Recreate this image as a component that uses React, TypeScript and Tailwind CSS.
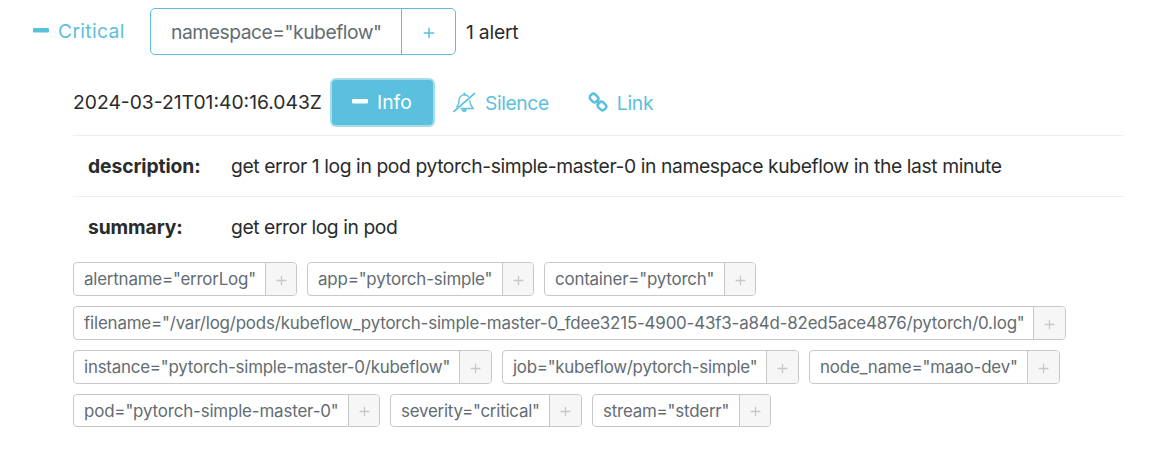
type Label = { text: string; width: string; plus: string; tracking: string };

const labelRows: { height: string; labels: Label[] }[] = [
  {
    height: "h-[34px]",
    labels: [
      { text: 'alertname="errorLog"', width: "w-[191px]", plus: "w-[32px]", tracking: "tracking-[-0.19px]" },
      { text: 'app="pytorch-simple"', width: "w-[194px]", plus: "w-[32px]", tracking: "tracking-[-0.17px]" },
      { text: 'container="pytorch"', width: "w-[179px]", plus: "w-[32px]", tracking: "tracking-[-0.2px]" },
    ],
  },
  {
    height: "h-[34px]",
    labels: [
      {
        text: 'filename="/var/log/pods/kubeflow_pytorch-simple-master-0_fdee3215-4900-43f3-a84d-82ed5ace4876/pytorch/0.log"',
        width: "w-[959px]",
        plus: "w-[33px]",
        tracking: "tracking-[-0.172px]",
      },
    ],
  },
  {
    height: "h-[34px]",
    labels: [
      { text: 'instance="pytorch-simple-master-0/kubeflow"', width: "w-[385px]", plus: "w-[33px]", tracking: "tracking-[-0.21px]" },
      { text: 'job="kubeflow/pytorch-simple"', width: "w-[263px]", plus: "w-[33px]", tracking: "tracking-[-0.25px]" },
      { text: 'node_name="maao-dev"', width: "w-[217px]", plus: "w-[33px]", tracking: "tracking-[-0.14px]" },
    ],
  },
  {
    height: "h-[33px]",
    labels: [
      { text: 'pod="pytorch-simple-master-0"', width: "w-[274px]", plus: "w-[32px]", tracking: "tracking-[-0.15px]" },
      { text: 'severity="critical"', width: "w-[158px]", plus: "w-[33px]", tracking: "tracking-[-0.22px]" },
      { text: 'stream="stderr"', width: "w-[146px]", plus: "w-[32px]", tracking: "tracking-[-0.2px]" },
    ],
  },
];

function MinusIcon() {
  return (
    <svg width="16" height="5" viewBox="0 0 16 5" fill="currentColor" aria-hidden="true">
      <rect width="16" height="4.4" rx="1.2" />
    </svg>
  );
}

function PlusIcon({ size, stroke }: { size: number; stroke: number }) {
  return (
    <svg width={size} height={size} viewBox="0 0 12 12" stroke="currentColor" strokeWidth={stroke} aria-hidden="true">
      <path d="M6 .7v10.6M.7 6h10.6" />
    </svg>
  );
}

function BellSlashIcon() {
  return (
    <svg width="23" height="21" viewBox="0 0 23 21" fill="none" stroke="currentColor" strokeWidth="1.3" aria-hidden="true">
      <path d="M3.4 15.2C5.3 13.4 6.2 11 6.2 7.6 6.2 4.8 8.4 2.8 11.4 2.8c2 0 3.5.8 4.3 2.1" />
      <path d="M16.6 8.4c.2 3.2 1.3 5.6 3.5 8.1H7.6" />
      <path d="M11.4 1.5v1" strokeWidth="2" strokeLinecap="round" />
      <path d="M8.5 17.2h5.4a2.7 2.7 0 0 1-5.4 0z" fill="currentColor" stroke="none" />
      <path d="M1 19.4 21.4 1.6" strokeWidth="1.8" strokeLinecap="round" />
    </svg>
  );
}

function ChainIcon() {
  return (
    <svg className="-mt-px" width="20" height="20" viewBox="0 0 20 20" fill="none" stroke="currentColor" strokeWidth="2.5" aria-hidden="true">
      <g transform="rotate(45 10 10)">
        <rect x="0.1" y="6.6" width="8.6" height="6.8" rx="2.8" />
        <rect x="11.3" y="6.6" width="8.6" height="6.8" rx="2.8" />
        <path d="M7.2 10h5.6" strokeWidth="2" />
      </g>
    </svg>
  );
}

function LabelChip({ label }: { label: Label }) {
  return (
    <div className="flex h-full overflow-hidden rounded-[4px] border border-[#c8c8c8]">
      <button className={`${label.width} ${label.tracking} flex items-center pl-[10px] text-left text-[16.9px] leading-[18px] text-[#636c72]`}>
        {label.text}
      </button>
      <button className={`${label.plus} -mr-px flex items-center justify-center border-l border-[#c8c8c8] bg-[#f6f6f6] pt-[2px] pr-px text-[#c8c8c8]`}>
        <PlusIcon size={11} stroke={1.4} />
      </button>
    </div>
  );
}

function Annotation({ name, children, tracking }: { name: string; children: string; tracking: string }) {
  return (
    <div className="flex h-[61px] items-center border-t border-[#eceeef] pl-[15px]">
      <div className="w-[143px] font-bold tracking-[-0.1px]">{name}:</div>
      <div className={tracking}>{children}</div>
    </div>
  );
}

export default function App() {
  return (
    <main className="h-[457px] w-[1150px] bg-white pt-2 pl-[33px] font-['Inter',sans-serif] text-[19.3px] leading-[24px] whitespace-nowrap text-[#292b2c]">
      <header className="flex h-[47px] items-center">
        <button className="flex w-[117px] items-center gap-[9px] pb-[2px] text-[#5bc0de]">
          <MinusIcon />
          <span className="tracking-[0.35px]">Critical</span>
        </button>
        <div className="flex h-[47px] w-[306px] rounded-[5px] border border-[#5bc0de]">
          <button className="flex w-[250px] items-center pl-5 tracking-[-0.48px] text-[#636c72]">namespace="kubeflow"</button>
          <button className="flex w-[54px] items-center justify-center border-l border-[#5bc0de] pt-[2px] text-[#5bc0de]">
            <PlusIcon size={12} stroke={1.5} />
          </button>
        </div>
        <span className="ml-[10px] tracking-[-0.2px]">1 alert</span>
      </header>

      <section className="ml-10 w-[1050px]">
        <div className="flex h-[80px] items-center pt-[15px]">
          <time className="w-[259px] pb-[2px]">2024-03-21T01:40:16.043Z</time>
          <button className="flex h-[45px] w-[101px] items-center gap-[9px] rounded-[4px] bg-[#5bc0de] pb-[2px] pl-[20px] text-white ring-2 ring-[#a5dcec]">
            <MinusIcon />
            <span>Info</span>
          </button>
          <button className="ml-5 flex items-center text-[#5bc0de]">
            <BellSlashIcon />
            <span className="ml-[9px] tracking-[-0.4px]">Silence</span>
          </button>
          <button className="ml-[39px] flex items-center text-[#5bc0de]">
            <ChainIcon />
            <span className="ml-[9px] tracking-[-0.3px]">Link</span>
          </button>
        </div>

        <Annotation name="description" tracking="tracking-[-0.4px]">
          get error 1 log in pod pytorch-simple-master-0 in namespace kubeflow in the last minute
        </Annotation>
        <Annotation name="summary" tracking="tracking-[-0.43px]">
          get error log in pod
        </Annotation>

        <div className="mt-[5px] flex flex-col gap-[10px]">
          {labelRows.map((row, index) => (
            <div key={index} className={`flex gap-[10px] ${row.height}`}>
              {row.labels.map((label) => (
                <LabelChip key={label.text} label={label} />
              ))}
            </div>
          ))}
        </div>
      </section>
    </main>
  );
}
